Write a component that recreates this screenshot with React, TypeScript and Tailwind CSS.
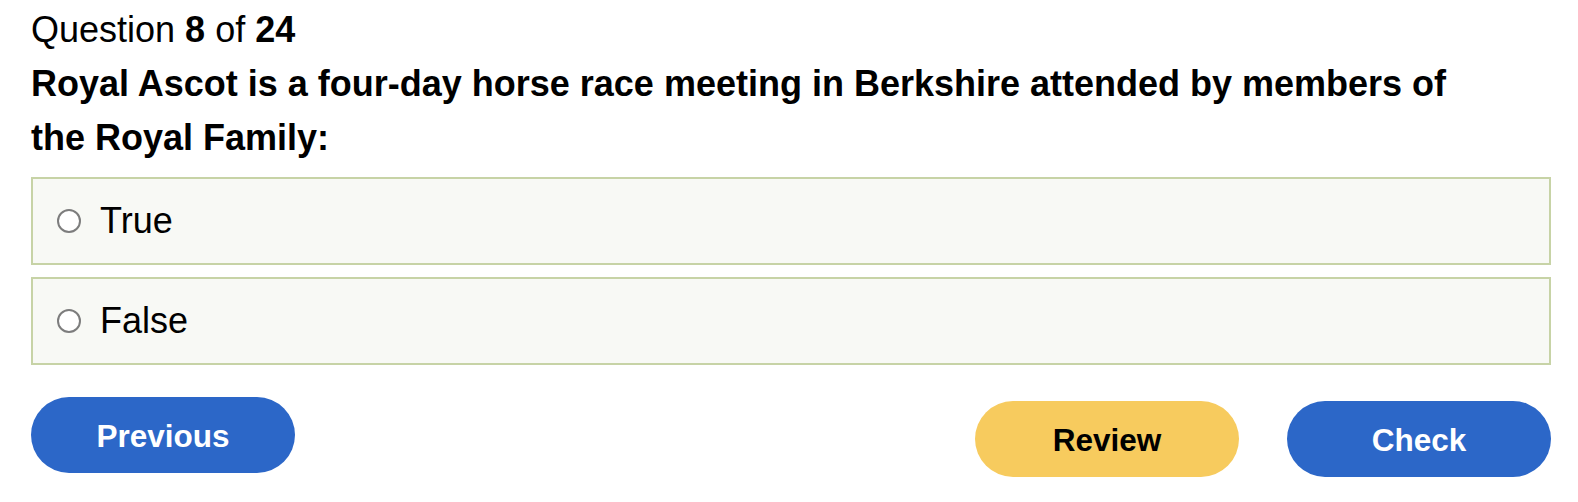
import { useState } from 'react';

const options = ['True', 'False'];

export default function App() {
  const [selected, setSelected] = useState<string | null>(null);

  return (
    <div className="min-h-screen bg-white pl-[31px] pr-[27px] pt-[3px] font-['Liberation_Sans',Arial,sans-serif] text-black">
      {/* Header */}
      <div className="text-[36px] leading-[54px]">
        Question <span className="font-bold">8</span> of <span className="font-bold">24</span>
      </div>
      <h1 className="max-w-[1440px] text-[36px] font-bold leading-[54px]">
        Royal Ascot is a four-day horse race meeting in Berkshire attended by members of the Royal Family:
      </h1>

      {/* Answers */}
      <div className="mt-[12px] flex flex-col gap-[12px]">
        {options.map((opt) => (
          <label
            key={opt}
            onClick={() => setSelected(opt)}
            className="flex h-[88px] cursor-pointer items-center gap-[19px] border-2 border-[#c7d3a6] bg-[#f8f9f5] pl-[24px]"
          >
            <span className="flex h-[24px] w-[24px] items-center justify-center rounded-full border-2 border-[#7d7d7d] bg-white">
              {selected === opt && <span className="h-[12px] w-[12px] rounded-full bg-[#2c67c8]" />}
            </span>
            <span className="text-[36px] leading-none">{opt}</span>
          </label>
        ))}
      </div>

      {/* Navigation */}
      <div className="mt-[32px] flex items-start justify-between">
        <button className="h-[76px] w-[264px] rounded-full bg-[#2c67c8] pt-[3px] text-[31.5px] font-bold text-white">
          Previous
        </button>
        <div className="mt-[4px] flex gap-[48px]">
          <button className="h-[76px] w-[264px] rounded-full bg-[#f7cb5e] pt-[3px] text-[31.5px] font-bold text-black">
            Review
          </button>
          <button className="h-[76px] w-[264px] rounded-full bg-[#2c67c8] pt-[3px] text-[31.5px] font-bold text-white">
            Check
          </button>
        </div>
      </div>
    </div>
  );
}
